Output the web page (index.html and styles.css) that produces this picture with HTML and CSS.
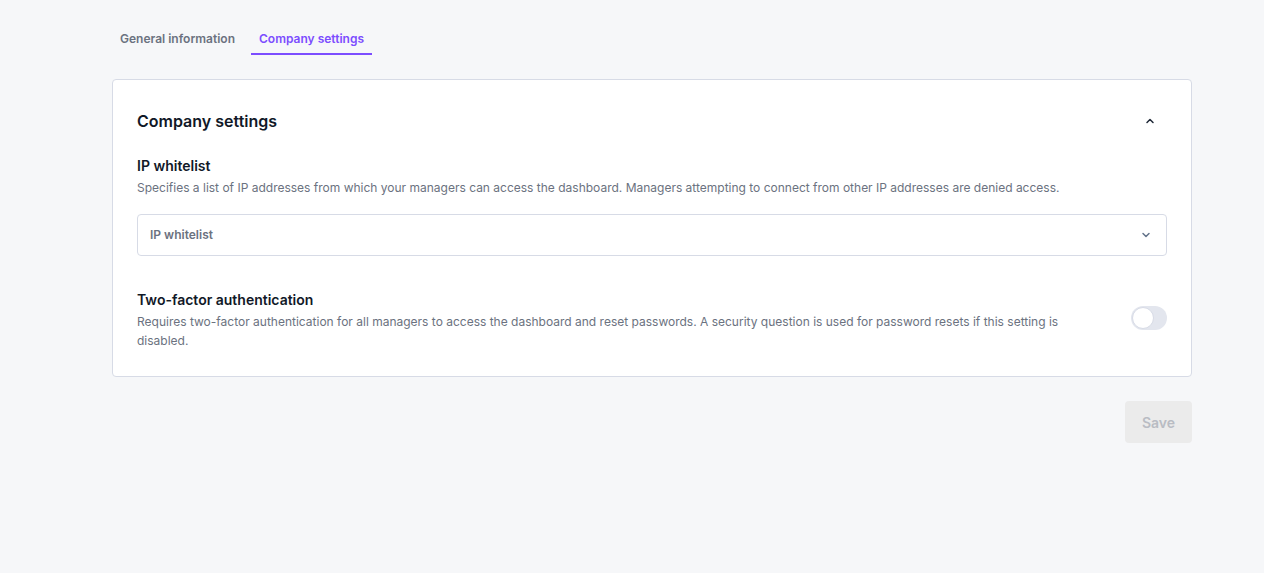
FILE: index.html
```html
<!DOCTYPE html>
<html lang="en">
<head>
<meta charset="utf-8">
<title>Company settings</title>
<link rel="stylesheet" href="styles.css">
</head>
<body>
<main class="page">
  <nav class="tabs">
    <a class="tab">General information</a>
    <a class="tab tab--active">Company settings</a>
  </nav>

  <section class="card">
    <header class="card__header">
      <h2 class="card__title">Company settings</h2>
      <button class="icon-btn" aria-label="Collapse">
        <svg width="12" height="12" viewBox="0 0 12 12" fill="none"><path d="M3 7.5L6 4.5L9 7.5" stroke="#1f2937" stroke-width="1.5" stroke-linecap="round" stroke-linejoin="round"/></svg>
      </button>
    </header>

    <div class="field">
      <h3 class="field__label">IP whitelist</h3>
      <p class="field__desc">Specifies a list of IP addresses from which your managers can access the dashboard. Managers attempting to connect from other IP addresses are denied access.</p>
      <div class="select">
        <span class="select__placeholder">IP whitelist</span>
        <svg width="12" height="12" viewBox="0 0 12 12" fill="none"><path d="M3 4.5L6 7.5L9 4.5" stroke="#64748b" stroke-width="1.5" stroke-linecap="round" stroke-linejoin="round"/></svg>
      </div>
    </div>

    <div class="field field--row">
      <div class="field__text">
        <h3 class="field__label">Two-factor authentication</h3>
        <p class="field__desc">Requires two-factor authentication for all managers to access the dashboard and reset passwords. A security question is used for password resets if this setting is disabled.</p>
      </div>
      <span class="toggle"><span class="toggle__knob"></span></span>
    </div>
  </section>

  <div class="actions">
    <button class="btn-save" disabled>Save</button>
  </div>
</main>
</body>
</html>
```

FILE: styles.css
```css
* { box-sizing: border-box; }

html, body {
  margin: 0;
  padding: 0;
  background: #f6f7f9;
  font-family: Inter, "Noto Sans", sans-serif;
  color: #111827;
}

.page {
  width: 1080px;
  margin-left: 112px;
  padding-top: 20px;
}

.tabs {
  display: flex;
  gap: 8px;
}

.tab {
  font-size: 12px;
  font-weight: 600;
  line-height: 20px;
  color: #6b7280;
  padding: 9px 8px 4px;
  border-bottom: 2px solid transparent;
}

.tab--active {
  color: #7c4dff;
  border-bottom-color: #7c4dff;
}

.card {
  margin-top: 24px;
  background: #fff;
  border: 1px solid #d7dbe6;
  border-radius: 4px;
  padding: 29px 24px 26px;
}

.card__header {
  display: flex;
  align-items: center;
  justify-content: space-between;
  height: 24px;
}

.card__title {
  margin: 0;
  font-size: 16px;
  font-weight: 600;
  line-height: 24px;
  color: #111827;
}

.icon-btn {
  border: 0;
  background: none;
  padding: 0;
  width: 24px;
  height: 24px;
  display: flex;
  align-items: center;
  justify-content: center;
  margin-right: 5px;
}

.field {
  margin-top: 23px;
}

.field__label {
  margin: 0;
  font-size: 14px;
  font-weight: 600;
  line-height: 20px;
  color: #111827;
}

.field__desc {
  margin: 2px 0 0;
  font-size: 12px;
  line-height: 19px;
  color: #6b7280;
}

.select {
  margin-top: 17px;
  height: 42px;
  border: 1px solid #d7dbe6;
  border-radius: 4px;
  display: flex;
  align-items: center;
  justify-content: space-between;
  padding: 0 14px 1px 12px;
}

.select__placeholder {
  font-size: 12px;
  font-weight: 600;
  color: #6b7280;
}

.field--row {
  margin-top: 34px;
  display: flex;
  align-items: center;
  gap: 24px;
}

.field__text {
  flex: 1;
}

.toggle {
  width: 36px;
  height: 24px;
  border-radius: 12px;
  background: #e3e6ee;
  display: flex;
  align-items: center;
  padding: 1px;
  flex-shrink: 0;
  margin-bottom: 4px;
}

.toggle__knob {
  width: 22px;
  height: 22px;
  border-radius: 50%;
  background: #fff;
  border: 1px solid #d7dbe6;
}

.actions {
  display: flex;
  justify-content: flex-end;
  margin-top: 24px;
}

.btn-save {
  width: 67px;
  height: 42px;
  border: 0;
  border-radius: 4px;
  background: #ebebeb;
  color: #b9bcc3;
  font-family: Inter, "Noto Sans", sans-serif;
  font-size: 14px;
  font-weight: 600;
}
```
